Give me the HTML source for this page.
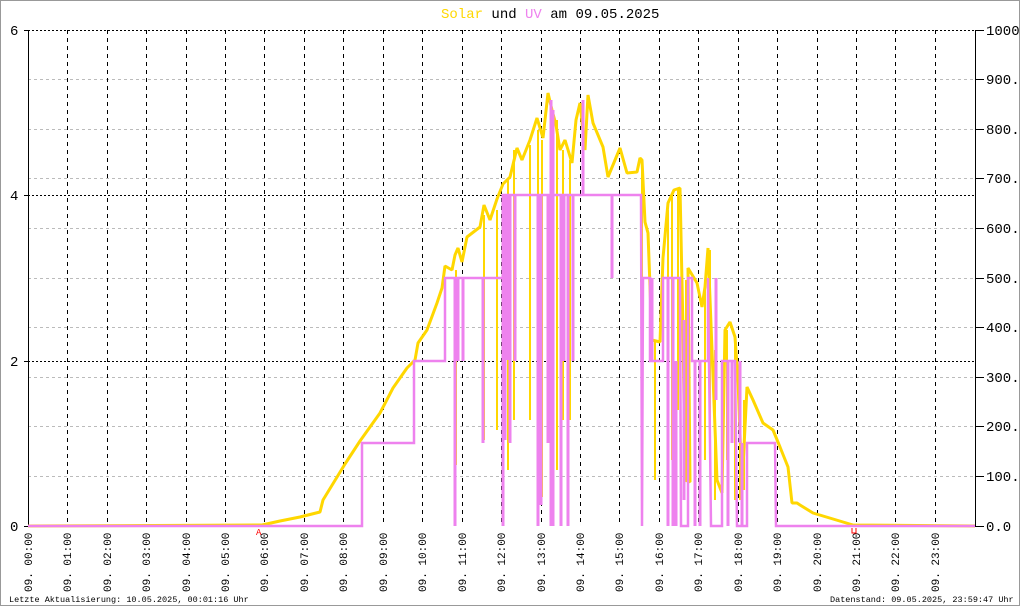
<!DOCTYPE html>
<html><head><meta charset="utf-8"><style>
html,body{margin:0;padding:0;background:#fff;}
svg{display:block;}
text{font-family:"Liberation Mono","DejaVu Sans Mono",monospace;}
</style></head><body>
<svg width="1020" height="606" viewBox="0 0 1020 606" xmlns="http://www.w3.org/2000/svg">
<rect x="0.5" y="0.5" width="1019" height="605" fill="#fff" stroke="#999" stroke-width="1"/>
<text x="441" y="18" font-size="14"><tspan fill="#ffd700">Solar</tspan><tspan fill="#000"> und </tspan><tspan fill="#ee82ee">UV</tspan><tspan fill="#000"> am 09.05.2025</tspan></text>
<!-- gray grid -->
<g stroke="#bbb" stroke-width="1" stroke-dasharray="3,3">
<line x1="28" x2="976" y1="79.5" y2="79.5"/><line x1="28" x2="976" y1="129.5" y2="129.5"/><line x1="28" x2="976" y1="178.5" y2="178.5"/><line x1="28" x2="976" y1="228.5" y2="228.5"/><line x1="28" x2="976" y1="278.5" y2="278.5"/><line x1="28" x2="976" y1="327.5" y2="327.5"/><line x1="28" x2="976" y1="377.5" y2="377.5"/><line x1="28" x2="976" y1="426.5" y2="426.5"/><line x1="28" x2="976" y1="476.5" y2="476.5"/>
</g>
<g stroke="#000" stroke-width="1" stroke-dasharray="2,2">
<line x1="28" x2="976" y1="30.5" y2="30.5"/><line x1="28" x2="976" y1="195.5" y2="195.5"/><line x1="28" x2="976" y1="361.5" y2="361.5"/>
</g>
<g stroke="#000" stroke-width="1" stroke-dasharray="4,4">
<line x1="67.5" x2="67.5" y1="30" y2="526"/><line x1="107.5" x2="107.5" y1="30" y2="526"/><line x1="146.5" x2="146.5" y1="30" y2="526"/><line x1="186.5" x2="186.5" y1="30" y2="526"/><line x1="225.5" x2="225.5" y1="30" y2="526"/><line x1="264.5" x2="264.5" y1="30" y2="526"/><line x1="304.5" x2="304.5" y1="30" y2="526"/><line x1="343.5" x2="343.5" y1="30" y2="526"/><line x1="383.5" x2="383.5" y1="30" y2="526"/><line x1="422.5" x2="422.5" y1="30" y2="526"/><line x1="462.5" x2="462.5" y1="30" y2="526"/><line x1="501.5" x2="501.5" y1="30" y2="526"/><line x1="541.5" x2="541.5" y1="30" y2="526"/><line x1="580.5" x2="580.5" y1="30" y2="526"/><line x1="619.5" x2="619.5" y1="30" y2="526"/><line x1="659.5" x2="659.5" y1="30" y2="526"/><line x1="698.5" x2="698.5" y1="30" y2="526"/><line x1="738.5" x2="738.5" y1="30" y2="526"/><line x1="777.5" x2="777.5" y1="30" y2="526"/><line x1="817.5" x2="817.5" y1="30" y2="526"/><line x1="856.5" x2="856.5" y1="30" y2="526"/><line x1="895.5" x2="895.5" y1="30" y2="526"/><line x1="935.5" x2="935.5" y1="30" y2="526"/>
</g>
<!-- axes -->
<g stroke="#000" stroke-width="1">
<line x1="28.5" x2="28.5" y1="30" y2="527"/><line x1="24" x2="29" y1="30.5" y2="30.5"/><line x1="24" x2="29" y1="195.5" y2="195.5"/><line x1="24" x2="29" y1="361.5" y2="361.5"/><line x1="24" x2="29" y1="526.5" y2="526.5"/>
<line x1="975.5" x2="975.5" y1="30" y2="527"/>
<line x1="975" x2="984" y1="30.5" y2="30.5"/><line x1="975" x2="984" y1="79.5" y2="79.5"/><line x1="975" x2="984" y1="129.5" y2="129.5"/><line x1="975" x2="984" y1="178.5" y2="178.5"/><line x1="975" x2="984" y1="228.5" y2="228.5"/><line x1="975" x2="984" y1="278.5" y2="278.5"/><line x1="975" x2="984" y1="327.5" y2="327.5"/><line x1="975" x2="984" y1="377.5" y2="377.5"/><line x1="975" x2="984" y1="426.5" y2="426.5"/><line x1="975" x2="984" y1="476.5" y2="476.5"/><line x1="975" x2="984" y1="526.5" y2="526.5"/>
</g>
<g font-size="14" fill="#000">
<text x="10" y="35">6</text><text x="10" y="200">4</text><text x="10" y="366">2</text><text x="10" y="531">0</text>
<text x="986" y="35">1000</text><text x="986" y="84">900.0</text><text x="986" y="134">800.0</text><text x="986" y="183">700.0</text><text x="986" y="233">600.0</text><text x="986" y="283">500.0</text><text x="986" y="332">400.0</text><text x="986" y="382">300.0</text><text x="986" y="431">200.0</text><text x="986" y="481">100.0</text><text x="986" y="531">0.0</text>
</g>
<!-- solar -->
<polyline fill="none" stroke="#ffd700" stroke-width="3" stroke-linejoin="bevel" points="28,526 262,525 280,521 300,517 320,512 323,500 345,464 360,441 380,413 393,388 407,368 415,360 418,343 427,330 437,303 442,288 445,266 452,270 455,255 458,248 462,262 467,237 480,227 484,205 490,220 497,199 503,184 510,177 517,148 522,160 530,140 537,118 543,138 548,93 552,110 556,125 560,150 565,140 572,163 576,120 580,103 585,150 588,95 593,123 603,147 608,177 620,148 627,173 637,172 640,158 642,160 645,222 648,233 652,340 660,342 663,258 668,203 674,190 680,188 683,330 685,480 690,482 688,268 697,283 702,307 705,287 708,248 712,350 717,480 722,493 725,330 730,322 735,337 738,380 742,487 747,387 753,400 763,423 773,430 780,447 788,467 792,503 797,503 800,505 813,513 833,519 853,525 975,526"/>
<!-- solar dips -->
<g stroke="#ffd700" stroke-width="2" fill="none">
<path d="M456 270V465M484 215V440M497 210V430M508 180V470M514 150V420M530 145V420M538 130V500M542 140V497M551 100V480M557 120V470M563 150V420M570 160V420M642 165V350M655 340V480M668 210V470M672 195V460M678 190V410M686 280V480M705 290V460M710 250V440M715 350V500M727 330V460M735 340V500M740 380V500M744 400V490"/>
</g>
<!-- UV -->
<polyline fill="none" stroke="#ee82ee" stroke-width="2.5" points="28,526 362,526 362,443 414,443 414,361 445,361 445,278 503,278 503,195 641,195 642,526 643,278 650,278 650,361 663,361 663,278 680,278 681,526 688,526 688,278 692,278 692,361 708,361 708,278 711,526 722,526 722,361 735,361 737,526 747,526 747,443 775,443 776,526 975,526"/>
<g stroke="#ee82ee" stroke-width="3" fill="none">
<path d="M455 278V526M458 278V361M463 278V361M483 278V443M503 195V526M505 195V440M507 195V360M510 195V443M515 195V361M538 195V526M541 195V505M548 195V443M551 100V526M553 110V526M561 195V526M564 195V361M568 195V526M573 195V361M583 100V195M612 195V278M652 278V361M668 278V526M673 278V526M676 361V526M684 320V500M695 361V526M700 361V526M716 278V400M728 361V526M732 361V443M740 361V443M742 443V526"/>
</g>
<!-- x labels -->
<g font-size="11" fill="#000">
<text transform="translate(32,592) rotate(-90)">09. 00:00</text><text transform="translate(71,592) rotate(-90)">09. 01:00</text><text transform="translate(111,592) rotate(-90)">09. 02:00</text><text transform="translate(150,592) rotate(-90)">09. 03:00</text><text transform="translate(190,592) rotate(-90)">09. 04:00</text><text transform="translate(229,592) rotate(-90)">09. 05:00</text><text transform="translate(268,592) rotate(-90)">09. 06:00</text><text transform="translate(308,592) rotate(-90)">09. 07:00</text><text transform="translate(347,592) rotate(-90)">09. 08:00</text><text transform="translate(387,592) rotate(-90)">09. 09:00</text><text transform="translate(426,592) rotate(-90)">09. 10:00</text><text transform="translate(466,592) rotate(-90)">09. 11:00</text><text transform="translate(505,592) rotate(-90)">09. 12:00</text><text transform="translate(545,592) rotate(-90)">09. 13:00</text><text transform="translate(584,592) rotate(-90)">09. 14:00</text><text transform="translate(623,592) rotate(-90)">09. 15:00</text><text transform="translate(663,592) rotate(-90)">09. 16:00</text><text transform="translate(702,592) rotate(-90)">09. 17:00</text><text transform="translate(742,592) rotate(-90)">09. 18:00</text><text transform="translate(781,592) rotate(-90)">09. 19:00</text><text transform="translate(821,592) rotate(-90)">09. 20:00</text><text transform="translate(860,592) rotate(-90)">09. 21:00</text><text transform="translate(899,592) rotate(-90)">09. 22:00</text><text transform="translate(939,592) rotate(-90)">09. 23:00</text>
</g>
<text x="256" y="535" font-size="9" fill="#f00">A</text>
<path d="M852 528V533H856V528" stroke="#f00" stroke-width="1" fill="none"/>
<g font-size="8.5" fill="#000">
<text x="9" y="602">Letzte Aktualisierung: 10.05.2025, 00:01:16 Uhr</text>
<text x="830" y="602">Datenstand: 09.05.2025, 23:59:47 Uhr</text>
</g>
</svg>
</body></html>
